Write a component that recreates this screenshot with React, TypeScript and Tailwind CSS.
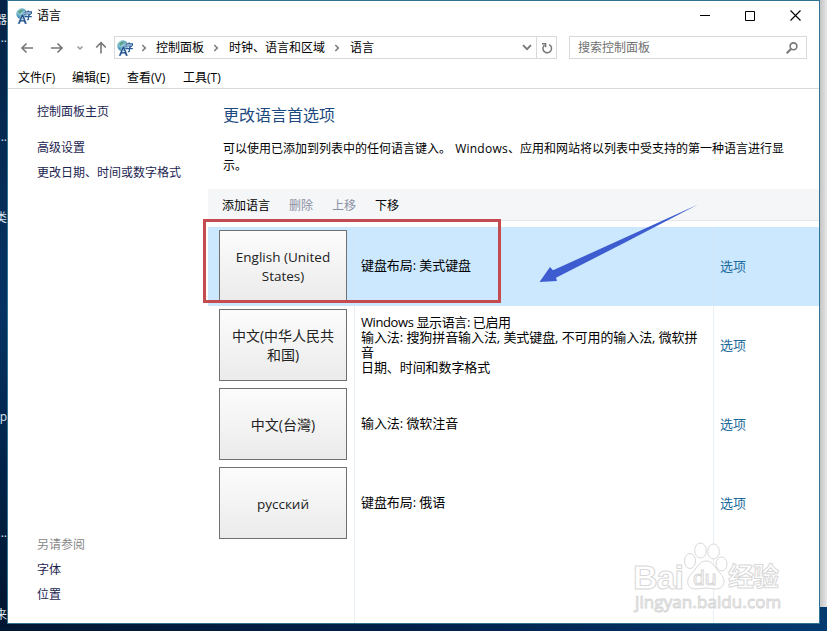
import React from "react";

function LanguageIcon() {
  return (
    <svg width="16" height="16" viewBox="0 0 16 16" className="shrink-0">
      <defs>
        <radialGradient id="globe" cx="0.35" cy="0.3" r="0.75">
          <stop offset="0" stopColor="#d3eff5" />
          <stop offset="0.5" stopColor="#5fabc4" />
          <stop offset="1" stopColor="#2a6c9c" />
        </radialGradient>
      </defs>
      <circle cx="5.8" cy="5.8" r="5.5" fill="url(#globe)" />
      <path d="M2 3.2 5 1.2l2.2 1.2L5.5 4.6 3 6zM7.5 1.5l2 1-1 1.5z" fill="#3f8f6b" opacity="0.75" />
      <path d="M1.6 16 5.6 6.2h1.8L11 16H8.7l-.8-2.3H4.7L3.8 16zM5.3 12h2.1L6.5 9z" fill="#1b4f8c" stroke="#fff" strokeWidth="0.4" />
      <path d="M9 5.6V3.8h6.4v1.8M12.2 2.4v1.4M10 6h4.4l-2 1.7v3.4q0 .8-1.5.6M8.6 8.6h7.2" fill="none" stroke="#fff" strokeWidth="2.2" />
      <path d="M9 5.6V3.8h6.4v1.8M12.2 2.4v1.4M10 6h4.4l-2 1.7v3.4q0 .8-1.5.6M8.6 8.6h7.2" fill="none" stroke="#235a96" strokeWidth="1.2" />
    </svg>
  );
}

function Chevron() {
  return (
    <svg width="6" height="8" viewBox="0 0 6 8" className="shrink-0">
      <path d="M1.3 1 4.3 4 1.3 7" fill="none" stroke="#777" strokeWidth="1.5" />
    </svg>
  );
}

function TitleBar() {
  return (
    <div className="flex h-[30px] items-center pl-2 pr-[18px]">
      <LanguageIcon />
      <span className="ml-[5px] leading-4">语言</span>
      <div className="ml-auto flex items-center pb-px">
        <svg width="10" height="10" viewBox="0 0 10 10">
          <path d="M0 4.5h10" stroke="#000" />
        </svg>
        <svg width="10" height="10" viewBox="0 0 10 10" className="ml-[35px]">
          <path d="M.5.5h9v9h-9z" fill="none" stroke="#000" />
        </svg>
        <svg width="11" height="11" viewBox="0 0 11 11" className="ml-[35px]">
          <path d="M.5.5l10 10M10.5.5l-10 10" stroke="#000" strokeWidth="1.1" />
        </svg>
      </div>
    </div>
  );
}

function AddressBar() {
  return (
    <div className="mt-[5px] flex h-[23px] items-center pr-3">
      <svg width="92" height="16" viewBox="0 0 92 16" className="ml-3 shrink-0" fill="none" stroke="#777" strokeWidth="1.6">
        <path d="M13 8H2M6.5 3.5 2 8l4.500 4.500M31 8h11M37.500 3.500 42 8l-4.500 4.500" />
        <path d="M57.500 6.500 60 9l2.500-2.500" stroke="#999" strokeWidth="1.500" />
        <path d="M81 13.500V3M76.200 7.500 81 2.700l4.800 4.800" />
      </svg>
      <div className="ml-[2px] flex h-[23px] w-[443px] items-center border border-[#d9d9d9] pl-[2px]">
        <LanguageIcon />
        <div className="ml-2 flex items-center leading-4">
          <Chevron />
          <span className="ml-[9px]">控制面板</span>
          <span className="ml-[9px]"><Chevron /></span>
          <span className="ml-[10px]">时钟、语言和区域</span>
          <span className="ml-[9px]"><Chevron /></span>
          <span className="ml-[10px]">语言</span>
        </div>
        <svg width="10" height="7" viewBox="0 0 10 7" className="ml-auto">
          <path d="M1 1.200 5 5.200 9 1.200" fill="none" stroke="#777" strokeWidth="1.800" />
        </svg>
        <div className="ml-[4px] flex h-full w-5 items-center justify-center border-l border-[#d9d9d9]">
          <svg width="12" height="12" viewBox="0 0 12 12">
            <path d="M8.200 2.600A4.300 4.300 0 1 1 3.400 3.200M1 1.700h3.600v3.600" fill="none" stroke="#777" strokeWidth="1.500" />
          </svg>
        </div>
      </div>
      <div className="ml-auto flex h-[23px] w-[238px] items-center border border-[#d9d9d9] pl-2 pr-2 text-[#707070]">
        <span className="leading-4">搜索控制面板</span>
        <svg width="12" height="12" viewBox="0 0 12 12" className="ml-auto">
          <circle cx="7.500" cy="4.300" r="3.400" fill="none" stroke="#777" strokeWidth="1.600" />
          <path d="M5.200 6.800.700 11.300" stroke="#777" strokeWidth="2" />
        </svg>
      </div>
    </div>
  );
}

function MenuBar() {
  return (
    <div className="flex h-[30px] items-center border-b border-[#d9d9d9] pl-[10px] pt-[9px] leading-4">
      <span className="w-[54px]">文件(F)</span>
      <span className="w-[55px]">编辑(E)</span>
      <span className="w-[56px]">查看(V)</span>
      <span>工具(T)</span>
    </div>
  );
}

function Sidebar() {
  return (
    <nav className="flex w-[200px] shrink-0 flex-col pb-5 pl-[29px] pt-[15px] leading-4 text-[#1c2450]">
      <a>控制面板主页</a>
      <a className="mt-5">高级设置</a>
      <a className="mt-[9px]">更改日期、时间或数字格式</a>
      <span className="mt-auto text-[#888]">另请参阅</span>
      <a className="mt-[9px]">字体</a>
      <a className="mt-[9px]">位置</a>
    </nav>
  );
}

type Row = { name: string[]; nameSize: string; details: string[]; selected?: boolean };

const rows: Row[] = [
  { name: ["English (United", "States)"], nameSize: "text-[13.5px] pt-[2px]", details: ["键盘布局: 美式键盘"], selected: true },
  {
    name: ["中文(中华人民共", "和国)"],
    nameSize: "text-sm",
    details: ["Windows 显示语言: 已启用", "输入法: 搜狗拼音输入法, 美式键盘, 不可用的输入法, 微软拼", "音", "日期、时间和数字格式"],
  },
  { name: ["中文(台灣)"], nameSize: "text-sm", details: ["输入法: 微软注音"] },
  { name: ["русский"], nameSize: "text-[13.5px] pt-[2px]", details: ["键盘布局: 俄语"] },
];

function LanguageRow({ row }: { row: Row }) {
  return (
    <div className={row.selected ? "flex h-[79px] bg-[#cce8ff]" : "flex h-[79px]"}>
      <div className="w-[147px] border-r border-[#d9e5ef]/60 pl-[11px] pt-[3px]">
        <div className={"flex h-[72px] w-32 flex-col items-center justify-center border border-[#707070] bg-linear-to-b from-[#fcfcfc] to-[#ebebeb] text-[#222] " + row.nameSize}>
          {row.name.map((line) => (
            <span key={line} className="whitespace-nowrap leading-[19px]">{line}</span>
          ))}
        </div>
      </div>
      <div className="flex w-[359px] flex-col justify-center border-r border-[#d9e5ef]/60 pb-[2px] pl-[6px] text-[13px]">
        {row.details.map((line) => (
          <span key={line} className={line.startsWith("Windows") ? "whitespace-nowrap leading-[15px] tracking-[-0.4px]" : "whitespace-nowrap leading-[15px] tracking-[-0.08px]"}>{line}</span>
        ))}
      </div>
      <a className="flex items-center pb-[2px] pl-[6px] text-[13px] leading-4 text-[#1a6a9c]">选项</a>
    </div>
  );
}

function Content() {
  return (
    <main className="flex min-w-0 flex-1 flex-col">
      <h1 className="ml-[15px] mt-[14px] text-base leading-6 text-[#1c4a80]">更改语言首选项</h1>
      <p className="ml-[15px] mt-[13px] h-[49px] whitespace-nowrap leading-[17px]">
        可以使用已添加到列表中的任何语言键入。 <span className="ml-px tracking-[0.25px]">Windows</span>、应用和网站将以列表中受支持的第一种语言进行显
        <br />
        示。
      </p>
      <div className="flex h-8 items-center border-b border-[#e4e6e8] bg-[#f5f6f7] pl-[14px] pt-[2px] leading-4">
        <span>添加语言</span>
        <span className="ml-[19px] text-[#8a90a4]">删除</span>
        <span className="ml-[19px] text-[#8a90a4]">上移</span>
        <span className="ml-[19px]">下移</span>
      </div>
      <div className="flex flex-1 flex-col pt-[6px]">
        {rows.map((row) => (
          <LanguageRow key={row.name[0]} row={row} />
        ))}
        <div className="flex flex-1">
          <div className="w-[147px] border-r border-[#d9e5ef]/60" />
          <div className="w-[359px] border-r border-[#d9e5ef]/60" />
        </div>
      </div>
    </main>
  );
}

function Watermark() {
  return (
    <div className="absolute left-[633px] top-[540px] h-[76px] w-[150px] whitespace-nowrap text-white/80 [-webkit-text-stroke:1px_#d8d8d8]">
      <svg width="150" height="76" viewBox="0 0 150 76" className="absolute left-0 top-0" fill="#fff" fillOpacity="0.8" stroke="#d8d8d8">
        <ellipse cx="57" cy="21" rx="5.500" ry="7.500" />
        <ellipse cx="67.500" cy="10.500" rx="5.800" ry="7.500" />
        <ellipse cx="80.500" cy="11.500" rx="5.800" ry="7.500" />
        <ellipse cx="88.500" cy="24" rx="5.500" ry="7" />
        <path d="M73 21c7 0 9 7 14 12 7 7 4 16-4 16-4 0-7-1-10-1s-7 1-11 1c-8 0-10-9-3-16 5-5 7-12 14-12z" />
      </svg>
      <span className="absolute left-[0px] top-[19px] font-['Liberation_Sans'] text-[34px] font-bold leading-9 tracking-[-1px]">Bai</span>
      <span className="absolute left-[60px] top-[26px] font-['Liberation_Sans'] text-[21px] leading-6">du</span>
      <span className="absolute left-[95px] top-[20px] text-[26px] font-bold leading-8 tracking-[-1px]">经验</span>
      <span className="absolute left-[2px] top-[50px] text-[17px] leading-6 tracking-[0.1px]">jingyan.baidu.com</span>
    </div>
  );
}

const desktopLabels = [
  { text: "器", top: "top-[12px]" },
  { text: "...", top: "top-[30px]" },
  { text: "...", top: "top-[129px]" },
  { text: "类", top: "top-[210px]" },
  { text: "ap", top: "top-[409px]" },
  { text: "...", top: "top-[525px]" },
  { text: "来", top: "top-[607px]" },
];

export default function App() {
  return (
    <div className="relative h-[631px] w-[827px] overflow-hidden bg-linear-to-r from-[#001733] via-[#00204a] to-[#053a70] font-['Open_Sans','Noto_Sans_CJK_SC',sans-serif] text-xs text-black">
      <div className="flex h-[624px]">
        <div className="relative w-[7px] shrink-0 overflow-hidden bg-linear-to-b from-[#052346] via-[#063363] to-[#001530]">
          {desktopLabels.map((label) => (
            <span key={label.top} className={"absolute right-0 text-xs leading-4 text-[#dfe6ee] " + label.top}>
              {label.text}
            </span>
          ))}
        </div>
        <div className="flex w-[813px] shrink-0 flex-col border border-[#2f7593] bg-white">
          <TitleBar />
          <AddressBar />
          <MenuBar />
          <div className="flex min-h-0 flex-1">
            <Sidebar />
            <Content />
          </div>
        </div>
        <div className="h-[607px] flex-1 bg-linear-to-r from-[#c4c4c4] to-[#e6e6e6]" />
      </div>
      <div className="absolute left-[203px] top-[219px] h-[84px] w-[298px] border-[3px] border-[#c44c50]" />
      <svg width="170" height="84" viewBox="535 202 170 84" className="absolute left-[535px] top-[202px]">
        <path d="M698 204.500 553 270.300 550 267 539.500 282 557 281 556 277.800 625 242.500z" fill="#3c5ccf" />
      </svg>
      <Watermark />
    </div>
  );
}
